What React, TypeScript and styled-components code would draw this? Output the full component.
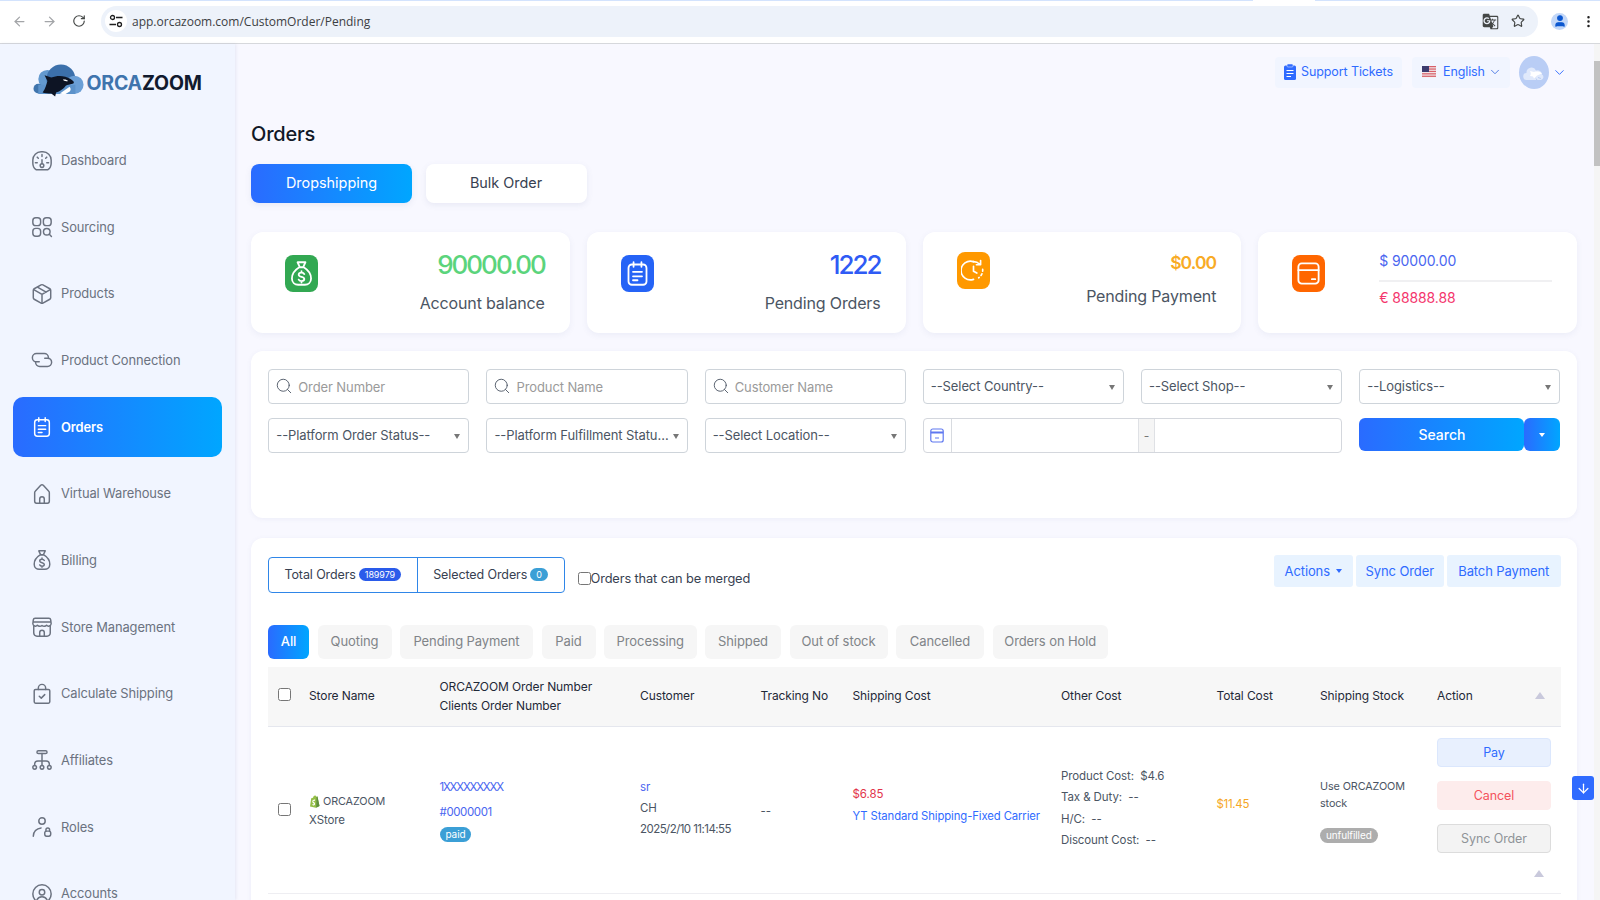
import React from "react";
import styled, { createGlobalStyle } from "styled-components";
import { ArrowLeft, ArrowRight, RotateCw, Star, EllipsisVertical, ChevronDown, Search as SearchIcon, ArrowDown, User } from "lucide-react";
import { MdGTranslate } from "react-icons/md";

const GRAD = "linear-gradient(90deg, #2a6bff 0%, #00a6ff 100%)";
const BLUE = "#2f6bff";

const Global = createGlobalStyle`
  html, body { margin: 0; padding: 0; height: 100%; overflow: hidden; }
  body { font-family: Inter, "Liberation Sans", sans-serif; color: #374151; background: #f8f8ff; }
  #root { height: 900px; }
  * { box-sizing: border-box; }
`;

const Screen = styled.div`display: flex; flex-direction: column; width: 1600px; height: 900px; overflow: hidden; position: relative;`;

/* Browser chrome */
const Chrome = styled.header`
  flex: 0 0 44px; display: flex; align-items: center; position: relative; background: #fff;
  border-bottom: 1px solid #d6d8dc; padding: 0 0 1px 4px;
`;
const TabStrip = styled.div`position: absolute; left: 0; right: 0; top: 0; height: 1px; background: linear-gradient(90deg, #d3e3fd 0 1253px, #fff 1253px 1315px, #d3e3fd 1315px);`;
const NavButton = styled.span<{ $on?: boolean }>`width: 30px; height: 30px; display: flex; align-items: center; justify-content: center; color: ${p => p.$on ? "#444746" : "#a3a5a8"};`;
const Omnibox = styled.div`
  margin-left: 7px; width: 1437px; height: 31px; border-radius: 16px; background: #edf2fa;
  display: flex; align-items: center; padding: 0 13px 0 4px;
`;
const SiteInfo = styled.span`width: 22px; height: 22px; border-radius: 50%; background: #fff; display: flex; align-items: center; justify-content: center; color: #1f1f1f;`;
const Url = styled.span`font-family: "Open Sans", sans-serif; font-size: 12px; color: #3c4043; margin-left: 5px; flex: 1;`;
const OmniIcon = styled.span`display: flex; color: #444746; margin-left: 12px;`;
const Profile = styled.span`margin-left: 13px; width: 17px; height: 17px; border-radius: 50%; background: #c2d7f8; color: #0b57d0; display: flex; align-items: center; justify-content: center; overflow: hidden;`;
const Kebab = styled.span`margin-left: 13px; display: flex; color: #1f1f1f;`;

const Body = styled.div`flex: 1; display: flex; min-height: 0;`;

/* Sidebar */
const Sidebar = styled.aside`
  flex: 0 0 235px; background: #f1f5ff; box-shadow: 1px 0 3px rgba(120,130,170,.14); padding: 19px 13px 0 12.5px; overflow: hidden; position: relative; z-index: 1;
`;
const Logo = styled.div`display: flex; align-items: center; height: 34px; padding-left: 20px; margin-bottom: 33.500px;`;
const LogoWord = styled.span`font-size: 19.5px; font-weight: 700; color: #111a2e; margin: 8px 0 0 2px; letter-spacing: -0.2px; line-height: 1;`;
const LogoOrca = styled.span`color: #3f74ad;`;
const NavItem = styled.div<{ $active?: boolean }>`
  height: 60px; margin-bottom: 6.67px; border-radius: 10px; display: flex; align-items: center; padding-left: 18px; gap: 8.5px;
  font-size: 12.9px; letter-spacing: -0.1px; font-weight: ${p => p.$active ? 600 : 400};
  color: ${p => p.$active ? "#fff" : "#6b7280"}; background: ${p => p.$active ? GRAD : "transparent"};
`;
const Glyph = styled.svg<{ $size?: number }>`
  width: ${p => p.$size ?? 22}px; height: ${p => p.$size ?? 22}px; flex: none; fill: none; stroke: currentColor; stroke-width: 1.6; stroke-linecap: round; stroke-linejoin: round;
`;

const I = (p: { size?: number; children: React.ReactNode }) => <Glyph $size={p.size} viewBox="0 0 24 24">{p.children}</Glyph>;

const icons: Record<string, (s?: number) => React.ReactNode> = {
  dashboard: s => <I size={s}><path d="M5.5 21.5C3.3 20 2 17.500 2 14.500V11a9 9 0 0 1 9-9h2a9 9 0 0 1 9 9v3.500c0 3-1.300 5.500-3.500 7z" /><path d="M12 5v2M6.800 7.800l1.200 1.200M17.200 7.800L16 9M4.800 14h2M17.200 14h2M12 10.500v4.500" /><circle cx="12" cy="17" r="2" /></I>,
  sourcing: s => <I size={s}><rect x="2" y="2" width="8.500" height="8.500" rx="3.200" /><rect x="13.500" y="2" width="8.500" height="8.500" rx="3.200" /><rect x="2" y="13.500" width="8.500" height="8.500" rx="3.200" /><circle cx="17.200" cy="17.200" r="3.600" /><path d="M20 20l2.300 2.300" /></I>,
  products: s => <I size={s}><path d="M21.500 8a2 2 0 0 0-1-1.730l-7.500-4.200a2 2 0 0 0-2 0l-7.500 4.200A2 2 0 0 0 2.500 8v8a2 2 0 0 0 1 1.730l7.500 4.200a2 2 0 0 0 2 0l7.500-4.200a2 2 0 0 0 1-1.730z" /><path d="M3 7.200l9 5.300 9-5.300M12 22v-9.500M7.500 4.700l9 5.300" /></I>,
  connection: s => <I size={s}><path d="M9 14H6a4.500 4.500 0 0 1 0-9h8.500A4.500 4.500 0 0 1 19 9.500" /><path d="M15 10h3a4.500 4.500 0 0 1 0 9H9.500A4.500 4.500 0 0 1 5 14.500" /></I>,
  orders: s => <I size={s}><rect x="4" y="4" width="16" height="18" rx="3" /><path d="M8.500 2v4M15.500 2v4M8 10.500h8M8 14.500h8M8 18h4" /></I>,
  warehouse: s => <I size={s}><path d="M4 20v-9.500a2 2 0 0 1 .6-1.500l6-6.500a2 2 0 0 1 2.800 0l6 6.500a2 2 0 0 1 .6 1.500V20a2 2 0 0 1-2 2H6a2 2 0 0 1-2-2z" /><path d="M9.500 22v-4.500a2.500 2.500 0 0 1 5 0V22" /></I>,
  billing: s => <I size={s}><path d="M8.500 2h7l-2 4.300h-3zM10 6.500C6 9 3.500 13 3.500 16.500 3.500 20 6 22 9 22h6c3 0 5.500-2 5.500-5.500 0-3.500-2.500-7.500-6.500-10z" /><path d="M14.500 12.500c-.5-1-1.500-1.300-2.500-1.300-1.400 0-2.500.7-2.500 1.900 0 2.600 5 1.300 5 3.800 0 1.200-1.100 1.800-2.500 1.800-1 0-2-.4-2.500-1.300M12 9.800v1.400M12 18.700V20" /></I>,
  store: s => <I size={s}><path d="M4.500 2.500h15a2 2 0 0 1 2 1.700L22 8.500a2.800 2.800 0 0 1-5 1.500 3.500 3.500 0 0 1-5 .3 3.500 3.500 0 0 1-5-.3 2.800 2.800 0 0 1-5-1.500l.5-4.300a2 2 0 0 1 2-1.700zM2.500 6.500h19" /><path d="M3 11v7.500A3.500 3.500 0 0 0 6.500 22h11a3.500 3.500 0 0 0 3.500-3.500V11M9.500 22v-4a2.500 2.500 0 0 1 5 0v4" /></I>,
  shipping: s => <I size={s}><rect x="3.500" y="7" width="17" height="15" rx="1.500" /><path d="M8 7V5.500a4 4 0 0 1 8 0V7M9 14.500l2.200 2 3.800-3.800" /></I>,
  affiliates: s => <I size={s}><rect x="6.500" y="2" width="11" height="3" rx="1.500" /><path d="M12 5v13M4 18v-1.500A3.500 3.500 0 0 1 7.500 13h9a3.500 3.500 0 0 1 3.500 3.500V18" /><circle cx="4" cy="20" r="2" /><circle cx="12" cy="20" r="2" /><circle cx="20" cy="20" r="2" /></I>,
  roles: s => <I size={s}><circle cx="12" cy="5.500" r="3.500" /><path d="M2.500 22c0-4.800 3.500-8.500 8.500-9" /><rect x="15" y="16.500" width="6.500" height="5.500" rx="2" /><path d="M16.300 16.500V15a2 2 0 0 1 4 0v1.500" /></I>,
  accounts: s => <I size={s}><circle cx="12" cy="12" r="10" /><circle cx="12" cy="10" r="3" /><path d="M6 19.500c1-3 3.300-4.500 6-4.500s5 1.500 6 4.500" /></I>,
  pending: s => <I size={s}><path d="M12 3.500a9 9 0 1 0 0 17" /><path d="M12 3.500a8.800 8.800 0 0 1 6 2.500M18.800 2.500V6.500h-4" /><path d="M12 8v4.800l3.200 1.700" /><path d="M20.800 10.800a9 9 0 0 1-3.800 8.200" strokeDasharray="1.800 2.600" /></I>,
  wallet: s => <I size={s}><rect x="3" y="3" width="18" height="18" rx="3" /><path d="M3 9h18M15 17h3" /></I>,
};

const NAV = [
  ["dashboard", "Dashboard"], ["sourcing", "Sourcing"], ["products", "Products"], ["connection", "Product Connection"],
  ["orders", "Orders"], ["warehouse", "Virtual Warehouse"], ["billing", "Billing"], ["store", "Store Management"],
  ["shipping", "Calculate Shipping"], ["affiliates", "Affiliates"], ["roles", "Roles"], ["accounts", "Accounts"],
];

/* Main */
const Main = styled.main`flex: 1; min-width: 0; padding: 13px 17px 0 16px; overflow: hidden; background: #f8f8ff;`;
const TopBar = styled.div`display: flex; justify-content: flex-end; align-items: center; height: 31px;`;
const TopChip = styled.div`
  height: 31px; background: #f1f5ff; border-radius: 4px; display: flex; align-items: center; color: ${BLUE}; font-size: 12.5px; letter-spacing: -0.1px; padding-bottom: 2px;
`;
const TicketChip = styled(TopChip)`width: 127px; padding-left: 9px; gap: 5px;`;
const LangChip = styled(TopChip)`width: 98px; margin-left: 10px; padding-left: 10px; gap: 7px;`;
const LangCaret = styled.span`display: flex; margin-left: -4px; color: #3f6fe0;`;
const Avatar = styled.span`width: 30px; height: 33px; border-radius: 50%; background: #b9cdf5; margin-left: 9px; display: flex; align-items: center; justify-content: center;`;
const AvatarCaret = styled.span`display: flex; margin: 0 10px 0 3px; color: ${BLUE};`;
const Title = styled.h1`margin: 34px 0 18px; font-size: 20px; line-height: 24px; font-weight: 500; color: #111827; letter-spacing: -0.2px;`;
const Tabs = styled.div`display: flex; gap: 13.500px; margin-bottom: 29px;`;
const MainTab = styled.button<{ $active?: boolean }>`
  width: 161px; height: 39px; border: 0; border-radius: 8px; font: 400 14.4px/37px Inter, sans-serif; padding: 0 0 2px; cursor: pointer;
  color: ${p => p.$active ? "#fff" : "#374151"}; background: ${p => p.$active ? GRAD : "#fff"};
  box-shadow: 0 2px 6px rgba(90,100,150,.10);
`;
const Cards = styled.section`display: grid; grid-template-columns: repeat(4, 1fr); gap: 17px; margin-bottom: 18px;`;
const Card = styled.div`height: 101px; background: #fff; border-radius: 12px; box-shadow: 0 2px 6px rgba(90,100,150,.08); display: flex; padding: 23px 25px 0 34px;`;
const IconTile = styled.span<{ $bg: string; $up?: boolean }>`
  width: 33px; height: 37px; border-radius: 8px; background: ${p => p.$bg}; color: #fff; display: flex; align-items: center; justify-content: center; flex: none;
  margin-top: ${p => p.$up ? "-3px" : "0"};
`;
const Stat = styled.div`flex: 1; text-align: right;`;
const StatValue = styled.div<{ $color: string; $small?: boolean }>`
  color: ${p => p.$color}; font-weight: ${p => p.$small ? 600 : 500}; font-size: ${p => p.$small ? "17.5px" : "26px"};
  line-height: 24px; letter-spacing: ${p => p.$small ? "-0.9px" : "-2px"}; margin-top: ${p => p.$small ? "-4px" : "-2px"};
`;
const StatLabel = styled.div<{ $small?: boolean }>`font-size: 16px; line-height: 22px; color: #4b5563; margin-top: ${p => p.$small ? "10px" : "15px"}; letter-spacing: -0.15px;`;
const Wallet = styled.div`flex: 1; margin-left: 54px;`;
const Money = styled.div<{ $color: string }>`font-size: 14px; line-height: 20px; color: ${p => p.$color}; letter-spacing: -0.1px; margin-top: -4px;`;
const MoneyRule = styled.hr`border: 0; height: 2px; background: #f0f0f2; margin: 8.500px 0 10.500px;`;

const Panel = styled.section`background: #fff; border-radius: 12px; box-shadow: 0 1px 5px rgba(90,100,150,.07);`;
const FilterPanel = styled(Panel)`height: 167px; padding: 18px 16.500px 0 17.250px; margin-bottom: 20px;`;
const FilterGrid = styled.div`display: grid; grid-template-columns: repeat(6, 1fr); gap: 14px 17px; grid-auto-rows: 35px;`;
const Field = styled.div`
  border: 1px solid #ced4da; border-radius: 4px; background: #fff; display: flex; align-items: center; min-width: 0; position: relative; font-size: 13px; color: #4b5563; letter-spacing: -0.1px;
`;
const SearchField = styled(Field)`padding-left: 6px; gap: 5px; color: #9a9a9a; svg { color: #4b5563; margin-top: -2px; }`;
const SelectField = styled(Field)`padding: 0 16px 0 7px;`;
const SelectText = styled.span`overflow: hidden; white-space: nowrap; text-overflow: ellipsis; margin-top: -2px;`;
const SelectCaret = styled.i`position: absolute; right: 8px; top: 15px; border: 3.500px solid transparent; border-top: 5px solid #777; border-bottom: 0;`;
const DateField = styled(Field)`grid-column: span 2; align-items: stretch; overflow: hidden; border-color: #d4d7dd;`;
const DateIcon = styled.span`flex: 0 0 28px; display: flex; align-items: center; justify-content: center; border-right: 1px solid #d8dbe0; color: #5f78f0;`;
const DateBox = styled.span`flex: 1;`;
const DateDash = styled.span`flex: 0 0 17px; background: #f5f5f5; border: 1px solid #dfe1e5; border-width: 0 1px; display: flex; align-items: center; justify-content: center; color: #777; font-size: 12px;`;
const SearchGroup = styled.div`display: flex;`;
const SearchButton = styled.button`flex: 1; border: 0; border-radius: 6px; background: ${GRAD}; color: #fff; font: 500 14px Inter, sans-serif; height: 33px; padding: 0 0 1px;`;
const SearchCaret = styled.button`flex: 0 0 36px; border: 0; border-radius: 6px; background: ${GRAD}; height: 33px; display: flex; align-items: center; justify-content: center;`;
const WhiteCaret = styled.i`border: 3.500px solid transparent; border-top: 4px solid #fff; border-bottom: 0;`;

const TablePanel = styled(Panel)`padding: 17px 16.500px 0 17px; height: 400px;`;
const ToolRow = styled.div`display: flex; align-items: flex-start; height: 69.500px;`;
const Segments = styled.div`display: flex; height: 36px; border: 1px solid #2f86e8; border-radius: 4px; margin-top: 2px;`;
const Segment = styled.div<{ $w: number }>`width: ${p => p.$w}px; display: flex; align-items: center; justify-content: center; gap: 3px; font-size: 12.500px; color: #374151; letter-spacing: -0.1px; padding-bottom: 2px; & + & { border-left: 1px solid #2f86e8; }`;
const CountBadge = styled.span<{ $bg: string }>`background: ${p => p.$bg}; color: #fff; font-size: 9px; line-height: 13px; padding: 0 6px; border-radius: 8px;`;
const Merge = styled.label`display: flex; align-items: center; font-size: 12.800px; color: #374151; margin: 16px 0 0 13px; letter-spacing: -0.12px;`;
const Check = styled.input`width: 13px; height: 13px; margin: 0; accent-color: #2f6bff; flex: none;`;
const ToolActions = styled.div`margin-left: auto; display: flex; gap: 3.500px;`;
const ToolButton = styled.span<{ $w: number }>`width: ${p => p.$w}px; height: 32px; background: #e8f3ff; color: ${BLUE}; border-radius: 3px; font-size: 13px; letter-spacing: -0.1px; display: flex; align-items: center; justify-content: center; gap: 6px;`;
const MiniCaret = styled.i`border: 3px solid transparent; border-top: 4px solid ${BLUE}; border-bottom: 0;`;
const Pills = styled.div`display: flex; gap: 8.500px; height: 34px; margin-bottom: 8.500px;`;
const Pill = styled.span<{ $active?: boolean; $w: number }>`
  width: ${p => p.$w}px; border-radius: 6px; display: flex; align-items: center; justify-content: center; font-size: 13px; letter-spacing: -0.1px; padding-bottom: 1px;
  color: ${p => p.$active ? "#fff" : "#808488"}; background: ${p => p.$active ? GRAD : "#f6f6f6"}; font-weight: ${p => p.$active ? 500 : 400};
`;
const COLS = "41px 130.500px 200.500px 120.500px 92px 208.500px 155.500px 103.500px 117px 124px";
const HeadRow = styled.div`display: grid; grid-template-columns: ${COLS}; height: 60px; padding-bottom: 2px; background: #f7f7f7; border-bottom: 1px solid #e5e7ee; align-items: center; font-size: 12px; color: #1f2937; letter-spacing: -0.1px;`;
const HeadTwoLines = styled.div`line-height: 19px;`;
const CheckCell = styled.div`padding-left: 10px; display: flex; margin-top: -3px;`;
const HeadAction = styled.div`display: flex; justify-content: space-between; align-items: center; padding-right: 16px;`;
const Sort = styled.i`display: block; width: 0; border: 5px solid transparent; border-bottom: 7px solid #c9c9dc; border-top: 0;`;
const DataRow = styled.div`display: grid; grid-template-columns: ${COLS}; height: 167px; padding-top: 1px; border-bottom: 1.500px solid #eeeef2; align-items: center; font-size: 11.500px; color: #4b5563; letter-spacing: -0.1px;`;
const StoreCell = styled.div`line-height: 18px;`;
const StoreLine = styled.div`display: flex; align-items: center; gap: 3px; font-size: 10.800px;`;
const Stack = styled.div<{ $lh: number; $pb?: number }>`line-height: ${p => p.$lh}px; padding-bottom: ${p => p.$pb ?? 0}px;`;
const Link = styled.div<{ $mb?: number; $ls?: number }>`color: #4a66f0; margin-bottom: ${p => p.$mb ?? 0}px; letter-spacing: ${p => p.$ls ?? -0.1}px;`;
const Timestamp = styled.div`letter-spacing: -0.55px;`;
const Carrier = styled.div`color: ${BLUE}; font-size: 11.300px; white-space: nowrap;`;
const Red = styled.div`color: #e2344a;`;
const Amount = styled.div`color: #f5a623; padding-bottom: 14px; letter-spacing: -0.3px;`;
const Tag = styled.span<{ $bg: string }>`display: inline-block; background: ${p => p.$bg}; color: #fff; font-size: 10px; line-height: 15.500px; padding: 0 6px; border-radius: 9px;`;
const StockNote = styled.div`font-size: 10.800px;`;
const StockTag = styled.div`margin-top: 15px; line-height: 0;`;
const ActionCell = styled.div`align-self: stretch; padding-top: 10px; display: flex; flex-direction: column; gap: 14px;`;
const RowButton = styled.span<{ $bg: string; $fg: string; $bd: string }>`
  width: 114px; height: 29px; border-radius: 4px; background: ${p => p.$bg}; color: ${p => p.$fg}; border: 1.500px solid ${p => p.$bd}; font-size: 12.500px; display: flex; align-items: center; justify-content: center;
`;
const RowSort = styled.span`margin: 3px 0 0 97px;`;
const Float = styled.span`position: absolute; left: 1572px; top: 776px; width: 22px; height: 24px; border-radius: 3px; background: ${BLUE}; color: #fff; display: flex; align-items: center; justify-content: center; z-index: 3;`;

const Scroll = styled.div`flex: 0 0 6px; background: #f5f5f5; position: relative; padding-top: 17px;`;
const Thumb = styled.div`height: 105px; background: #c2c2c2;`;

const ChromeTune = () => (
  <svg width="14" height="14" viewBox="0 0 14 14" fill="none" stroke="currentColor" strokeWidth="1.300">
    <circle cx="3.500" cy="3.500" r="2" /><path d="M7 3.500h6.500M.5 10.500H7" /><circle cx="10.500" cy="10.500" r="2" />
  </svg>
);

const LogoMark = () => (
  <svg width="52" height="33" viewBox="0 0 54 33">
    <circle cx="15" cy="15" r="9.500" fill="#6399cf" />
    <circle cx="29" cy="15" r="15" fill="#3c70ab" />
    <circle cx="43" cy="21" r="9.500" fill="#6b9fd6" />
    <circle cx="5.500" cy="25" r="5" fill="#3f74ad" />
    <path d="M5.500 21H44v9.500H5.500z" fill="#5c92ca" />
    <path d="M12 11 L19 13.500 C25 11 33 11 39 15 C42 17 44 19 41 20 C38 21 36 21 34 22 C32 25 28 28 24 29 L23 33 L19 30 C16 30 12 30 10 29 C13 25 14 20 15 17 Z" fill="#0d1424" />
    <path d="M31 15.500c2-.5 4.500.2 5.500 1.500-2 .6-4.500.3-5.500-1.500z" fill="#fff" />
    <path d="M28 30l10-7c1.500 2 1.500 3.500 0 5l-5 3z" fill="#fff" />
  </svg>
);

const Flag = () => (
  <svg width="14" height="12" viewBox="0 0 14 12">
    <rect width="14" height="12" fill="#f3f3f5" />
    {[0, 2.400, 4.800, 7.200, 9.600].map(y => <rect key={y} y={y} width="14" height="1.300" fill="#d8606a" />)}
    <rect width="7" height="6" fill="#3c3b6e" />
  </svg>
);

const Shopify = () => (
  <svg width="11" height="13" viewBox="0 0 11 13">
    <path d="M1 11.500 2.200 3.300 4 2.700C4.400 1.200 5.200.5 6 .5c.6 0 1 .5 1.200 1.200L8.400 1.500 10.500 11 6.800 12.800z" fill="#95bf47" />
    <path d="M7.200 12.700l3.300-1.700L8.500 1.500l-.9.200z" fill="#5e8e3e" />
    <path d="M6.200 4.700 5.800 6c-1-.4-1.700 0-1.500.5.200.6 1.900.9 1.800 2.400-.1 1.400-1.800 1.900-2.800 1.100l.3-1c.6.400 1.300.4 1.300-.1 0-.7-1.700-.8-1.600-2.400.1-1.500 1.700-2.200 2.900-1.800z" fill="#fff" />
  </svg>
);

const AvatarMark = () => (
  <svg width="22" height="16" viewBox="0 0 22 16">
    <path d="M4 15a3.500 3.500 0 0 1-.5-7 5 5 0 0 1 9.500-2.500A4.500 4.500 0 0 1 19 9.500 3 3 0 0 1 18 15z" fill="#e0e9fb" />
    <path d="M7 6l4 1c3-1 6-.5 8 1.500l-5 2-3 3-1-2-3-.5c1-1.500 1-3 0-5z" fill="#fff" />
    <path d="M15 12.500l3 1M13 13.500l1 1.500" stroke="#b9cdf5" strokeWidth="1" />
  </svg>
);

const TicketIcon = () => (
  <svg width="12" height="16" viewBox="0 0 12 16">
    <rect y="1.500" width="12" height="14.500" rx="1.500" fill="#2f6bff" />
    <rect x="3" width="6" height="3" rx="1" fill="#2f6bff" stroke="#f1f5ff" strokeWidth=".5" />
    <path d="M2.500 6.500h7M2.500 9.500h7M2.500 12.500h4.500" stroke="#fff" strokeWidth="1" />
  </svg>
);

const PILLS: [string, number][] = [
  ["All", 41], ["Quoting", 74], ["Pending Payment", 133], ["Paid", 54], ["Processing", 92.500], ["Shipped", 76], ["Out of stock", 98], ["Cancelled", 88], ["Orders on Hold", 115.500],
];

const Search = ({ text }: { text: string }) => (
  <SearchField><SearchIcon size={18} strokeWidth={1.200} /><span>{text}</span></SearchField>
);
const Select = ({ text }: { text: string }) => (
  <SelectField><SelectText>{text}</SelectText><SelectCaret /></SelectField>
);

export default function App() {
  return (
    <Screen>
      <Global />
      <Chrome>
        <TabStrip />
        <NavButton><ArrowLeft size={15} /></NavButton>
        <NavButton><ArrowRight size={15} /></NavButton>
        <NavButton $on><RotateCw size={14} /></NavButton>
        <Omnibox>
          <SiteInfo><ChromeTune /></SiteInfo>
          <Url>app.orcazoom.com/CustomOrder/Pending</Url>
          <OmniIcon><MdGTranslate size={17} /></OmniIcon>
          <OmniIcon><Star size={14} /></OmniIcon>
        </Omnibox>
        <Profile><User size={14} fill="currentColor" /></Profile>
        <Kebab><EllipsisVertical size={15} /></Kebab>
      </Chrome>
      <Body>
        <Sidebar>
          <Logo>
            <LogoMark />
            <LogoWord><LogoOrca>ORCA</LogoOrca>ZOOM</LogoWord>
          </Logo>
          {NAV.map(([key, label]) => (
            <NavItem key={key} $active={label === "Orders"}>{icons[key]()}{label}</NavItem>
          ))}
        </Sidebar>
        <Main>
          <TopBar>
            <TicketChip><TicketIcon />Support Tickets</TicketChip>
            <LangChip><Flag />English<LangCaret><ChevronDown size={14} strokeWidth={1.500} /></LangCaret></LangChip>
            <Avatar><AvatarMark /></Avatar>
            <AvatarCaret><ChevronDown size={15} strokeWidth={1.500} /></AvatarCaret>
          </TopBar>
          <Title>Orders</Title>
          <Tabs>
            <MainTab $active>Dropshipping</MainTab>
            <MainTab>Bulk Order</MainTab>
          </Tabs>
          <Cards>
            <Card>
              <IconTile $bg="#32a852">{icons.billing(27)}</IconTile>
              <Stat><StatValue $color="#5bd47c">90000.00</StatValue><StatLabel>Account balance</StatLabel></Stat>
            </Card>
            <Card>
              <IconTile $bg="#2563f6">{icons.orders(27)}</IconTile>
              <Stat><StatValue $color="#2f5bf5">1222</StatValue><StatLabel>Pending Orders</StatLabel></Stat>
            </Card>
            <Card>
              <IconTile $bg="#ff9900" $up>{icons.pending(25)}</IconTile>
              <Stat><StatValue $color="#f8ab25" $small>$0.00</StatValue><StatLabel $small>Pending Payment</StatLabel></Stat>
            </Card>
            <Card>
              <IconTile $bg="#ff6600">{icons.wallet(27)}</IconTile>
              <Wallet>
                <Money $color="#4a66f0">$ 90000.00</Money>
                <MoneyRule />
                <Money $color="#f4366d">€ 88888.88</Money>
              </Wallet>
            </Card>
          </Cards>
          <FilterPanel>
            <FilterGrid>
              <Search text="Order Number" />
              <Search text="Product Name" />
              <Search text="Customer Name" />
              <Select text="--Select Country--" />
              <Select text="--Select Shop--" />
              <Select text="--Logistics--" />
              <Select text="--Platform Order Status--" />
              <Select text="--Platform Fulfillment Status--" />
              <Select text="--Select Location--" />
              <DateField>
                <DateIcon>
                  <svg width="14" height="15" viewBox="0 0 14 15" fill="none" stroke="currentColor" strokeWidth="1.200">
                    <rect x=".8" y="1" width="12.400" height="13" rx="2" /><path d="M.8 4.500h12.400" strokeWidth="2" /><path d="M5 10h4" />
                  </svg>
                </DateIcon>
                <DateBox />
                <DateDash>-</DateDash>
                <DateBox />
              </DateField>
              <SearchGroup>
                <SearchButton>Search</SearchButton>
                <SearchCaret><WhiteCaret /></SearchCaret>
              </SearchGroup>
            </FilterGrid>
          </FilterPanel>
          <TablePanel>
            <ToolRow>
              <Segments>
                <Segment $w={147.500}>Total Orders <CountBadge $bg="#2a5bea">189979</CountBadge></Segment>
                <Segment $w={147}>Selected Orders <CountBadge $bg="#3b9fd6">0</CountBadge></Segment>
              </Segments>
              <Merge><Check type="checkbox" />Orders that can be merged</Merge>
              <ToolActions>
                <ToolButton $w={78.500}>Actions <MiniCaret /></ToolButton>
                <ToolButton $w={87.500}>Sync Order</ToolButton>
                <ToolButton $w={113.500}>Batch Payment</ToolButton>
              </ToolActions>
            </ToolRow>
            <Pills>
              {PILLS.map(([label, w]) => <Pill key={label} $w={w} $active={label === "All"}>{label}</Pill>)}
            </Pills>
            <HeadRow>
              <CheckCell><Check type="checkbox" /></CheckCell>
              <div>Store Name</div>
              <HeadTwoLines>ORCAZOOM Order Number<br />Clients Order Number</HeadTwoLines>
              <div>Customer</div>
              <div>Tracking No</div>
              <div>Shipping Cost</div>
              <div>Other Cost</div>
              <div>Total Cost</div>
              <div>Shipping Stock</div>
              <HeadAction>Action<Sort /></HeadAction>
            </HeadRow>
            <DataRow>
              <CheckCell><Check type="checkbox" /></CheckCell>
              <StoreCell><StoreLine><Shopify />ORCAZOOM</StoreLine>XStore</StoreCell>
              <Stack $lh={16}>
                <Link $mb={9} $ls={-1.2}>1XXXXXXXXX</Link>
                <Link $mb={6} $ls={-0.4}>#0000001</Link>
                <Tag $bg="#3b9fd6">paid</Tag>
              </Stack>
              <Stack $lh={21} $pb={4}><Link>sr</Link><div>CH</div><Timestamp>2025/2/10 11:14:55</Timestamp></Stack>
              <div>--</div>
              <Stack $lh={22} $pb={12}><Red>$6.85</Red><Carrier>YT Standard Shipping-Fixed Carrier</Carrier></Stack>
              <Stack $lh={21.500} $pb={4}>
                <div>Product Cost:&nbsp; $4.6</div>
                <div>Tax &amp; Duty:&nbsp; --</div>
                <div>H/C:&nbsp; --</div>
                <div>Discount Cost:&nbsp; --</div>
              </Stack>
              <Amount>$11.45</Amount>
              <Stack $lh={17.500}>
                <StockNote>Use ORCAZOOM<br />stock</StockNote>
                <StockTag><Tag $bg="#adadad">unfulfilled</Tag></StockTag>
              </Stack>
              <ActionCell>
                <RowButton $bg="#e8f0fe" $fg={BLUE} $bd="#dbe7fd">Pay</RowButton>
                <RowButton $bg="#fdecec" $fg="#f4525c" $bd="#fdecec">Cancel</RowButton>
                <RowButton $bg="#f3f3f3" $fg="#8f9398" $bd="#dcdcdc">Sync Order</RowButton>
                <RowSort><Sort /></RowSort>
              </ActionCell>
            </DataRow>
          </TablePanel>
        </Main>
        <Scroll><Thumb /></Scroll>
      </Body>
      <Float><ArrowDown size={15} /></Float>
    </Screen>
  );
}
